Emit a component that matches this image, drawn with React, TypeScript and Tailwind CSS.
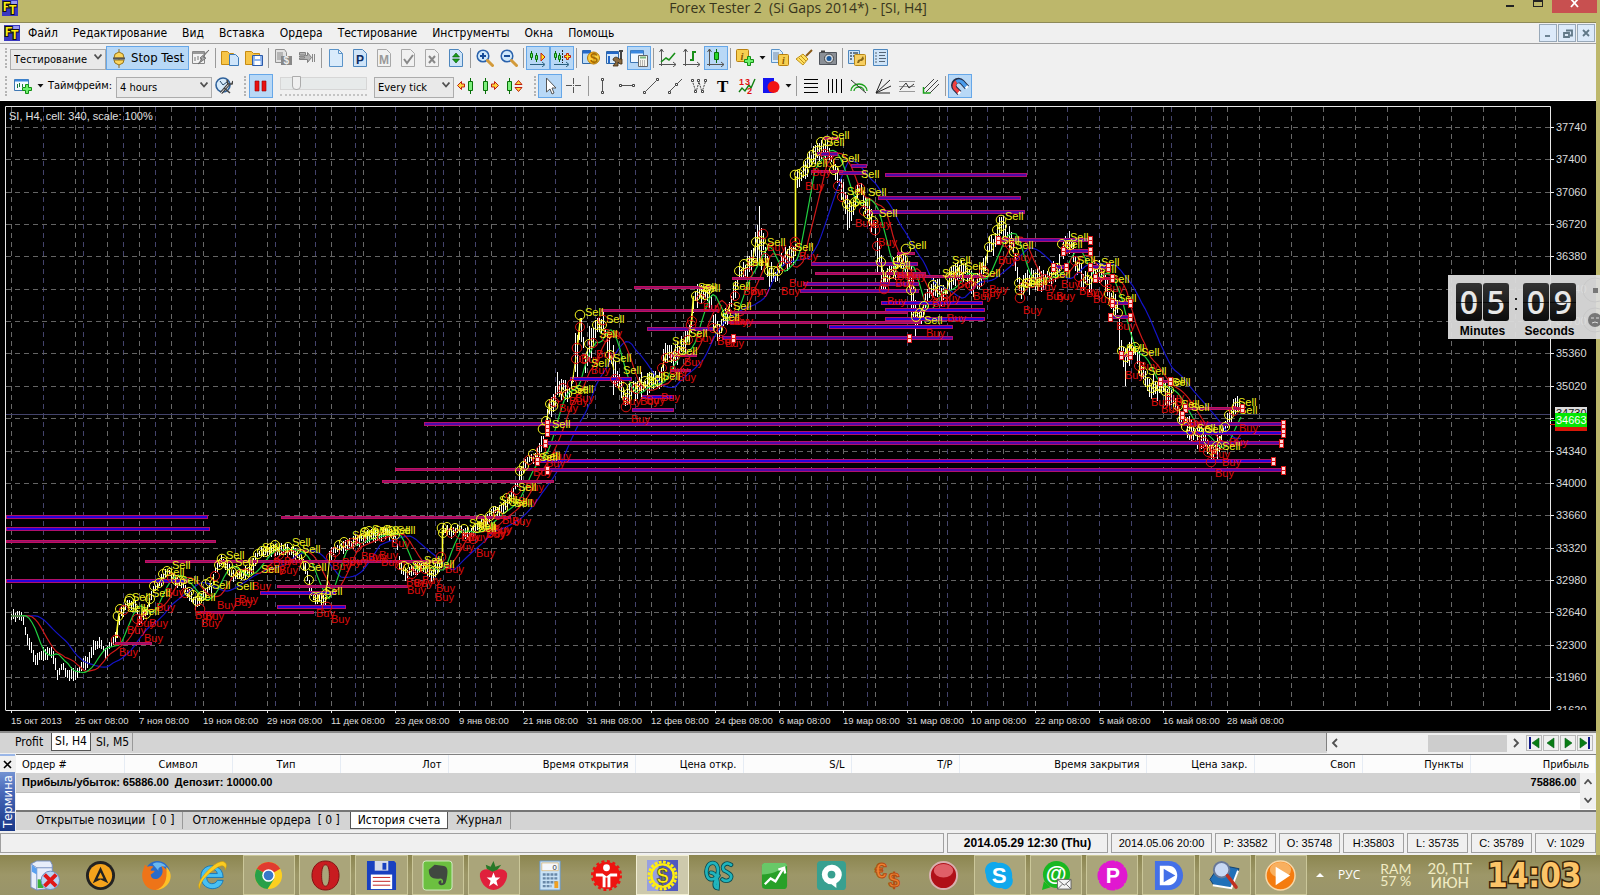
import React from "react";

type Pt = [number, number];

const UI = "font-['DejaVu_Sans_Condensed','DejaVu_Sans',sans-serif]";
const ARIAL = "font-['Liberation_Sans',Arial,sans-serif]";

/* ------------------------------------------------------------------ */
/* Chart data                                                          */
/* ------------------------------------------------------------------ */

const PRICE: Pt[] = [
  [11, 616], [20, 615], [23, 620], [26, 635], [30, 645], [33, 656], [37, 660], [42, 654], [50, 651], [54, 658], [57, 674], [62, 666],
  [68, 674], [76, 674], [80, 668], [88, 660], [93, 647], [99, 642], [105, 653], [110, 642], [116, 637], [120, 614], [128, 602],
  [135, 606], [140, 620], [146, 612], [152, 592], [160, 580], [168, 571], [174, 578], [182, 584], [190, 597], [198, 605],
  [206, 590], [212, 585], [216, 566], [222, 561], [232, 575], [240, 576], [250, 570], [258, 553], [270, 550], [280, 549],
  [292, 551], [300, 558], [306, 572], [312, 596], [320, 600], [326, 602], [328, 555], [336, 550], [350, 543], [370, 536],
  [390, 533], [396, 538], [399, 563], [405, 574], [415, 568], [424, 565], [430, 576], [436, 568], [441, 562], [443, 530],
  [452, 532], [460, 530], [470, 535], [476, 528], [485, 521], [495, 510], [505, 507], [513, 492], [520, 475], [526, 460],
  [536, 458], [543, 438], [549, 408], [556, 392], [562, 385], [568, 396], [574, 375], [580, 322], [585, 360], [590, 342],
  [597, 328], [603, 322], [608, 345], [613, 368], [620, 385], [626, 401], [632, 390], [640, 385], [650, 384], [660, 380],
  [664, 352], [672, 358], [680, 350], [690, 335], [694, 298], [700, 293], [710, 295], [713, 322], [719, 330], [726, 316],
  [732, 300], [736, 284], [742, 270], [750, 266], [757, 238], [763, 240], [768, 275], [776, 274], [782, 262], [790, 256],
  [795, 248], [797, 178], [802, 175], [808, 163], [816, 152], [824, 146], [831, 158], [836, 178], [842, 190], [848, 214],
  [854, 205], [860, 184], [866, 213], [875, 225], [879, 256], [884, 284], [890, 272], [900, 262], [908, 268], [914, 318],
  [920, 318], [928, 292], [936, 286], [943, 297], [950, 278], [958, 272], [965, 272], [974, 285], [982, 272], [988, 250],
  [995, 240], [1001, 224], [1006, 236], [1012, 242], [1016, 266], [1020, 288], [1030, 280], [1045, 277], [1058, 270],
  [1062, 248], [1070, 243], [1076, 262], [1082, 280], [1090, 280], [1097, 266], [1104, 278], [1110, 300], [1117, 308],
  [1120, 345], [1124, 360], [1130, 352], [1136, 352], [1142, 373], [1150, 386], [1160, 388], [1170, 394], [1178, 412],
  [1188, 428], [1195, 434], [1205, 440], [1212, 456], [1218, 444], [1225, 426], [1231, 414], [1237, 406], [1241, 404],
];

const noise = (n: number) => {
  const v = Math.sin(n * 12.9898) * 43758.5453;
  return v - Math.floor(v);
};

const priceAt = (x: number) => {
  if (x <= PRICE[0][0]) return PRICE[0][1];
  for (let i = 1; i < PRICE.length; i++) {
    const [x1, y1] = PRICE[i];
    if (x <= x1) {
      const [x0, y0] = PRICE[i - 1];
      return y0 + ((y1 - y0) * (x - x0)) / (x1 - x0);
    }
  }
  return PRICE[PRICE.length - 1][1];
};

const SPIKES: Record<number, [number, number]> = {
  557: [372, 395], 575: [333, 372], 577: [335, 380], 589: [326, 362], 591: [328, 358], 613: [345, 395], 755: [232, 256],
  757: [225, 262], 759: [206, 262], 761: [228, 270], 797: [170, 188], 847: [195, 230], 849: [200, 228], 877: [238, 272],
  881: [255, 290], 911: [265, 318], 913: [280, 322], 915: [300, 336], 1119: [315, 350], 1125: [348, 386], 1131: [332, 352],
};

const BARS = Array.from({ length: 615 }, (_, i) => {
  const x = 11 + i * 2;
  const spike = SPIKES[x];
  if (spike) return { x, hi: spike[0], lo: spike[1] };
  const y = priceAt(x);
  const swing = x > 540 ? 11 : 5;
  return { x, hi: Math.round(y - 2 - noise(i) * swing), lo: Math.round(y + 2 + noise(i + 900) * (swing + 1)) };
});

const BAR_PATH = BARS.map((b) => `M${b.x}.5 ${b.hi}V${b.lo}`).join("");

const average = (period: number, shift: number) => {
  const out: string[] = [];
  for (let x = 11; x <= 1242; x += 3) {
    let sum = 0;
    for (let k = 0; k < period; k++) sum += priceAt(x - (shift + k) * 2);
    out.push(`${x},${(sum / period).toFixed(1)}`);
  }
  return out.join(" ");
};

const CIRCLES = Array.from({ length: 270 }, (_, i) => {
  const x = 120 + i * 4.3;
  const red = noise(i + 40) > 0.6;
  return { x: Math.round(x), y: Math.round(priceAt(x) + (red ? 4 : -2) + (noise(i + 7) - 0.5) * 8), red };
}).filter((c) => c.x < 1238);

const EXTRA_CIRCLES: [number, number, boolean][] = [
  [116, 640, true], [118, 616, false], [130, 599, false], [580, 315, false], [577, 348, true], [603, 320, true],
  [691, 325, true], [763, 234, true], [763, 247, false], [795, 175, false], [795, 242, true], [442, 528, false],
  [441, 557, true], [626, 407, true], [884, 289, true], [906, 249, false], [1001, 220, false], [1020, 290, false],
  [1020, 298, true], [875, 230, true], [1211, 462, true], [1237, 407, false], [827, 141, false], [838, 162, false],
  [200, 609, true], [327, 607, true], [222, 559, false], [543, 429, false], [553, 406, false],
];

const SELL: Pt[] = [
  [133, 597], [128, 608], [142, 611], [153, 593], [173, 565], [167, 572], [181, 580], [198, 597], [227, 555], [236, 562],
  [213, 585], [237, 586], [263, 547], [293, 542], [303, 549], [262, 569], [309, 567], [325, 591], [353, 535], [361, 532], [373, 529],
  [381, 531], [393, 530], [398, 530], [437, 564], [425, 560], [413, 565], [478, 526], [500, 500], [515, 503], [586, 312], [607, 319], [600, 334],
  [614, 358], [624, 370], [592, 363], [576, 389], [571, 390], [648, 377], [663, 376], [673, 341], [680, 351], [690, 333],
  [734, 306], [722, 317], [703, 288], [699, 287], [733, 286], [543, 456], [540, 457], [553, 424], [519, 487], [510, 502],
  [470, 523], [479, 528], [832, 135], [827, 142], [842, 158], [862, 174], [848, 191], [853, 202], [869, 192], [880, 213],
  [768, 242], [796, 247], [746, 262], [752, 262], [810, 163], [909, 245], [953, 260], [966, 266], [983, 273], [1006, 216],
  [1002, 240], [1016, 245], [1071, 237], [1065, 244], [1023, 283], [1030, 281], [1053, 274], [1078, 260], [1102, 262],
  [1099, 269], [1112, 279], [1119, 298], [925, 320], [893, 265], [943, 273], [1127, 348], [1142, 352], [1149, 371],
  [1168, 381], [1173, 382], [1182, 404], [1192, 407], [1198, 428], [1206, 429], [1239, 402], [1240, 410], [1223, 446],
];

const BUY: Pt[] = [
  [128, 630], [137, 623], [150, 623], [145, 638], [120, 652], [157, 607], [166, 592], [196, 615], [206, 616], [202, 623],
  [218, 605], [235, 602], [240, 599], [253, 586], [267, 569], [280, 570], [274, 562], [285, 561], [317, 613], [332, 619], [333, 566], [343, 562],
  [350, 561], [362, 556], [369, 557], [380, 555], [382, 562], [392, 543], [407, 582], [415, 583], [408, 590], [423, 580],
  [437, 588], [436, 597], [446, 569], [456, 547], [462, 537], [470, 537], [477, 553], [488, 533], [493, 530], [503, 520],
  [604, 333], [597, 354], [582, 359], [592, 370], [576, 398], [570, 401], [560, 408], [553, 456], [547, 463], [534, 472],
  [526, 487], [519, 501], [513, 521], [494, 529], [487, 534], [623, 401], [641, 401], [647, 400], [662, 397], [632, 419],
  [678, 377], [685, 362], [670, 370], [696, 338], [704, 307], [718, 341], [726, 343], [735, 321], [744, 291], [751, 291],
  [782, 291], [790, 283], [806, 186], [813, 172], [856, 223], [873, 224], [879, 242], [768, 247], [800, 256],
  [730, 321], [888, 301], [896, 283], [898, 276], [908, 276], [927, 333], [933, 303], [942, 298], [948, 318], [958, 284],
  [974, 296], [983, 293], [990, 289], [999, 260], [1014, 257], [1024, 310], [1038, 287], [1047, 296], [1057, 296],
  [1062, 284], [1080, 291], [1087, 293], [1094, 299], [1106, 288], [1117, 326], [1140, 366], [1126, 375], [1166, 397],
  [1152, 402], [1162, 409], [1176, 402], [1183, 422], [1190, 423], [1199, 448], [1212, 454], [1216, 473], [1223, 462],
  [1230, 442], [1240, 428],
];

/* start, end, middle, kind: 0 = narrow, 1 = blue core, 2 = violet core */
const GAPS: [number, number, number, number][] = [
  [6, 207, 517, 1], [6, 209, 529, 1], [6, 215, 541, 0], [6, 187, 581, 1], [145, 440, 561, 0], [281, 510, 517, 0],
  [277, 407, 586, 0], [260, 335, 593, 1], [277, 345, 607, 1], [200, 313, 612, 0], [115, 151, 643, 0],
  [424, 1283, 424, 2], [547, 1283, 433, 1], [545, 1281, 443, 2], [537, 1273, 461, 1], [547, 1283, 470, 2],
  [395, 545, 469, 0], [382, 553, 481, 0], [570, 631, 379, 1], [632, 673, 410, 2], [642, 673, 397, 1], [634, 714, 287, 0],
  [601, 718, 310, 0], [647, 714, 329, 2], [672, 696, 355, 0], [670, 690, 370, 0], [732, 763, 278, 0],
  [811, 917, 264, 2], [815, 925, 273, 0], [803, 918, 284, 2], [800, 918, 291, 2], [881, 982, 303, 1], [885, 984, 310, 1],
  [885, 984, 319, 1], [829, 952, 327, 1], [722, 952, 338, 2], [725, 907, 312, 0], [728, 920, 322, 0], [885, 1026, 175, 2],
  [878, 1020, 198, 2], [870, 1024, 212, 2], [851, 866, 166, 2], [839, 865, 173, 2], [817, 837, 154, 2], [823, 838, 138, 0],
  [811, 842, 171, 0], [897, 985, 276, 0], [897, 914, 253, 0], [998, 1090, 240, 2], [1063, 1090, 251, 2],
  [1053, 1066, 267, 2], [1090, 1108, 267, 2], [1095, 1112, 278, 0], [1112, 1130, 303, 2], [1110, 1130, 317, 2],
  [1121, 1130, 355, 0], [1160, 1170, 381, 0], [1185, 1242, 408, 0],
];

const HANDLES: Pt[] = [
  [547, 424], [547, 432], [545, 443], [537, 461], [547, 470], [1283, 424], [1283, 433], [1281, 443], [1273, 461], [1283, 470],
  [733, 338], [909, 338], [998, 240], [1090, 240], [1063, 251], [1090, 251], [1053, 267], [1066, 267], [1090, 267],
  [1108, 267], [1095, 278], [1112, 278], [1112, 303], [1130, 303], [1110, 317], [1130, 317], [1121, 355], [1130, 355],
  [1160, 381], [1170, 381], [1185, 408], [1242, 408], [1182, 415],
];

const WEEKS = [
  43, 83, 123, 155, 195, 235, 275, 315, 355, 395, 435, 443, 475, 515, 555, 595, 635, 675, 715, 755, 795, 827, 867, 907, 947,
  987, 1027, 1067, 1099, 1131, 1171, 1211,
];
const GRID_X = Array.from({ length: 48 }, (_, i) => 11 + i * 32).filter((x) => !WEEKS.includes(x));
const GRID_Y = Array.from({ length: 18 }, (_, i) => Math.round(127 + i * 32.35));
const DATES = [
  "15 окт 2013", "25 окт 08:00", "7 ноя 08:00", "19 ноя 08:00", "29 ноя 08:00", "11 дек 08:00", "23 дек 08:00",
  "9 янв 08:00", "21 янв 08:00", "31 янв 08:00", "12 фев 08:00", "24 фев 08:00", "6 мар 08:00", "19 мар 08:00",
  "31 мар 08:00", "10 апр 08:00", "22 апр 08:00", "5 май 08:00", "16 май 08:00", "28 май 08:00",
];

function Chart() {
  return (
    <svg viewBox="0 101 1596 630" className="block h-auto w-full bg-black" fontFamily="'Liberation Sans', Arial, sans-serif">
      <g strokeDasharray="5 4" shapeRendering="crispEdges">
        {GRID_X.map((x) => <path key={x} d={`M${x}.5 107V710`} stroke="#686868" />)}
        {WEEKS.map((x) => <path key={x} d={`M${x}.5 107V710`} stroke="#43436b" />)}
        {GRID_Y.map((y) => <path key={y} d={`M6 ${y}.5H1550`} stroke="#646464" />)}
      </g>
      <path d="M6 414.5H1550" stroke="#43436b" />
      <path d={BAR_PATH} stroke="#fff" strokeWidth="1" shapeRendering="crispEdges" />
      <polyline points={average(20, 7)} fill="none" stroke="#1414c8" strokeWidth="1.2" />
      <polyline points={average(12, 4)} fill="none" stroke="#d01818" strokeWidth="1.2" />
      <polyline points={average(8, 2)} fill="none" stroke="#20d040" strokeWidth="1.2" />
      <g shapeRendering="crispEdges">
        {GAPS.map(([a, b, y, k], i) => (
          <rect
            key={i} x={a + 0.5} y={k ? y - 1.5 : y - 0.5} width={b - a} height={k ? 3 : 2}
            fill={k === 1 ? "#2800d8" : k === 2 ? "#5008a8" : "#90106c"} stroke={k === 0 ? "#c01060" : "#b0106c"}
          />
        ))}
      </g>
      <g stroke="#ffff30">
        <path d="M795.5 176V242M442.5 530V556M580.5 318L577.5 345M693.5 296L691.5 322M119 614L116 638" fill="none" strokeWidth="1.6" />
        {CIRCLES.map((c, i) => (i % 3 === 0 ? <path key={i} d={`M${c.x} ${c.y}L${c.x + 4} ${Math.round(priceAt(c.x + 4))}`} /> : null))}
      </g>
      <g fill="none">
        {CIRCLES.map((c, i) => <circle key={i} cx={c.x} cy={c.y} r="4.5" stroke={c.red ? "#e01010" : "#f4f420"} />)}
        {EXTRA_CIRCLES.map(([x, y, red], i) => <circle key={i} cx={x} cy={y} r="4.8" stroke={red ? "#e01010" : "#f4f420"} />)}
      </g>
      <g fontSize="11" fill="#e00c0c">
        {BUY.map(([x, y], i) => <text key={i} x={x - 1} y={y + 4}>Buy</text>)}
      </g>
      <g fontSize="11" fill="#f2f21c">
        {SELL.map(([x, y], i) => <text key={i} x={x - 1} y={y + 4}>Sell</text>)}
      </g>
      <g shapeRendering="crispEdges" fill="#ffd8d8" stroke="#d81818">
        {HANDLES.map(([x, y], i) => <path key={i} d={`M${x - 2}.5 ${y - 4}.5h4v8h-4zM${x - 2}.5 ${y}.5h4`} />)}
      </g>
      <path d="M5.5 710V106.5H1550.5V710.5H5.5" fill="none" stroke="#e8e8e8" />
      {GRID_Y.map((y) => <path key={y} d={`M1550 ${y}.5h4`} stroke="#e8e8e8" />)}
      {DATES.map((d, i) => <path key={d} d={`M${11 + i * 64}.5 710v3`} stroke="#e8e8e8" />)}
      <text x="9" y="120" fontSize="11" fill="#e0e0e0">SI, H4, cell: 340, scale: 100%</text>
      <g fontSize="11" fill="#dcdcdc">
        {GRID_Y.map((y, i) => <text key={y} x="1556" y={y + 4}>{37740 - i * 340}</text>)}
        <svg x="1550" y="700" width="46" height="10" viewBox="1550 700 46 10"><text x="1556" y="714">31620</text></svg>
      </g>
      <g fontSize="9.5" fill="#dcdcdc">
        {DATES.map((d, i) => <text key={d} x={11 + i * 64} y="724">{d}</text>)}
      </g>
      <path d="M1555 407h32v8h-32z" fill="#dcdcdc" />
      <svg x="1555" y="407" width="32" height="6" viewBox="1555 407 32 6"><text x="1556" y="417" fontSize="11" fill="#111">34730</text></svg>
      <path d="M1555 425h32v6h-32z" fill="#d81808" />
      <path d="M1555 413h32v14h-32z" fill="#04e804" />
      <text x="1556" y="424" fontSize="11" fill="#fff">34663</text>
      <path d="M1550 420.5h5" stroke="#04e804" />
      <path d="M1550 424.5h5" stroke="#d81808" />
    </svg>
  );
}

/* ------------------------------------------------------------------ */
/* Toolbar                                                             */
/* ------------------------------------------------------------------ */

const ICONS: Record<string, React.ReactNode> = {
  strategy: <><path d="M.5 2.5h12v12h-12z" fill="#f2f2f2" stroke="#888" /><path d="M1 4h11" stroke="#999" strokeWidth="2" /><path d="M3 8v4M6 7v4M9 9v3" stroke="#777" /><path d="M17 1L8 9l2 1-4 5 8-6-3-1z" fill="#aaa" stroke="#666" strokeWidth=".8" /></>,
  open: <><path d="M.5 2.5h6l2 2h4v11h-12z" fill="#f7c548" stroke="#c78b10" /><path d="M8.500 5.500h6l3 3v8h-9z" fill="#cfe5fa" stroke="#3d7ab8" /></>,
  save: <><path d="M.5 2.500h6l2 2h6v11h-14z" fill="#f7c548" stroke="#c78b10" /><path d="M7.500 6.500h10v10h-10z" fill="#8db4ee" stroke="#2c5aa8" /><path d="M10 7h5v3h-5zM9.500 12h6v4h-6z" fill="#fff" /></>,
  money: <><path d="M1.500 .500h9l2 3v10h-11z" fill="#e2e2e2" stroke="#909090" /><path d="M3 4h6M3 6h6M3 8h5M3 10h5" stroke="#888" /><path d="M7 7h11v9h-11z" fill="#888" /><text x="9.500" y="15" fontSize="10" fontWeight="bold" fill="#eee">$</text></>,
  step: <><path d="M1.500 3.500h6v3h2v-3l4 5-4 5v-3h-8v-1.500h5v-1h-5v-1h5v-1h-5z" fill="#b4b4b4" stroke="#808080" /><path d="M14.500 5v8M16.500 5v8" stroke="#888" /></>,
  doc: <path d="M2.500 .500h9l4 4v13h-13z M11.500 .500v4h4" fill="#d9ebfb" stroke="#5a93c8" />,
  docP: <><path d="M2.500 .500h9l4 4v13h-13z" fill="#cfe4f8" stroke="#4d86bd" /><text x="5" y="14.500" fontSize="12" fontWeight="bold" fill="#0b2a63">P</text></>,
  docM: <><path d="M2.500 .500h9l4 4v13h-13z" fill="#f1f1f1" stroke="#a8a8a8" /><text x="4" y="14.500" fontSize="12" fontWeight="bold" fill="#999">M</text></>,
  docV: <><path d="M2.500 .500h9l4 4v13h-13z" fill="#f1f1f1" stroke="#a8a8a8" /><path d="M5 10l3 4 6-8" fill="none" stroke="#888" strokeWidth="2" /></>,
  docX: <><path d="M2.500 .500h9l4 4v13h-13z" fill="#f1f1f1" stroke="#a8a8a8" /><path d="M6 7l6 7M12 7l-6 7" stroke="#888" strokeWidth="2" /></>,
  docUp: <><path d="M2.500 .500h9l4 4v13h-13z" fill="#cfe4f8" stroke="#4d86bd" /><path d="M5.500 8l3.500-4 3.500 4zM5.500 10l3.500 4 3.500-4z" fill="#18a018" stroke="#064f06" strokeWidth=".6" /></>,
  zin: <><circle cx="7" cy="7" r="5.800" fill="#cfe8fb" stroke="#2a62ac" strokeWidth="1.500" /><path d="M4 7h6M7 4v6" stroke="#174c98" strokeWidth="2" /><path d="M11.500 11.500l5 5" stroke="#d39a3a" strokeWidth="3" strokeLinecap="round" /></>,
  zout: <><circle cx="7" cy="7" r="5.800" fill="#cfe8fb" stroke="#2a62ac" strokeWidth="1.500" /><path d="M4 7h6" stroke="#174c98" strokeWidth="2" /><path d="M11.500 11.500l5 5" stroke="#d39a3a" strokeWidth="3" strokeLinecap="round" /></>,
  roll: <><path d="M2.500 2v9M7.500 4v9" stroke="#087008" /><path d="M1.500 4.500h2v4h-2zM6.500 6.500h2v4h-2z" fill="#60f060" stroke="#087008" /><path d="M12 4l4 4-4 4z" fill="#ffe21c" stroke="#c02010" /><path d="M1 15.500h14M13 13l3 2.500-3 2.500" fill="none" stroke="#2a6080" /></>,
  shift: <><path d="M2.500 2v9M6.500 4v9" stroke="#087008" /><path d="M1.500 4.500h2v4h-2zM5.500 6.500h2v4h-2z" fill="#60f060" stroke="#087008" /><path d="M9.500 1v13" stroke="#222" strokeDasharray="2 1" /><path d="M13.500 4.500h2v2h2v2h-2v2h-2v-2h-2v-2h2z" fill="#ffe21c" stroke="#c02010" /><path d="M1 15.500h14M13 13l3 2.500-3 2.500" fill="none" stroke="#2a6080" /></>,
  dollar: <><path d="M.5 1.500h8v13h-8z" fill="#bcdcf8" stroke="#2f68a8" /><path d="M1 3h8" stroke="#2468c8" strokeWidth="3" /><circle cx="11.500" cy="9" r="6" fill="#ffcf3c" stroke="#b47808" /><text x="8" y="14" fontSize="14" fontWeight="bold" fill="#a86c00">$</text></>,
  build: <><path d="M.5 2.500h12v12h-12z" fill="#d8eafb" stroke="#2f68a8" /><path d="M1 4h11M3 7v7" stroke="#2468c8" strokeWidth="2" /><path d="M15 1v9M13 2h4" stroke="#444" strokeWidth="2" /><path d="M7 11c0-3 4-4 6-1h3v5h-2l-2-2v4h-5l3-4z" fill="#8a6a40" stroke="#3a2810" strokeWidth=".8" /></>,
  calc: <><path d="M.5 1.500h13v12h-13z" fill="#eff7ff" stroke="#3f78b4" /><path d="M1 3h12" stroke="#3a88e0" strokeWidth="3" /><path d="M8.500 6.500h9v11h-9z" fill="#f6f6ee" stroke="#666" /><path d="M10 8.500h6" stroke="#7ab87a" strokeWidth="2" /><path d="M10 12h6M10 14h6M10 16h6" stroke="#777" strokeDasharray="1 1" /></>,
  line: <><path d="M2.500 0v17M0 15.500h17M0.500 3l2-3 2 3M14 13l3 2.500-3 2.500" fill="none" stroke="#555" /><path d="M2 13l5-4 3 2 6-7" fill="none" stroke="#189018" strokeWidth="1.600" /></>,
  bars: <><path d="M2.500 0v17M0 15.500h17M0.500 3l2-3 2 3M14 13l3 2.500-3 2.500" fill="none" stroke="#555" /><path d="M10 2v10M10 3h3M7 11h3" fill="none" stroke="#189018" strokeWidth="2" /></>,
  candle: <><path d="M2.500 0v17M0 15.500h17M0.500 3l2-3 2 3M14 13l3 2.500-3 2.500" fill="none" stroke="#555" /><path d="M9.500 0v14" stroke="#087008" /><path d="M7.500 3.500h4v7h-4z" fill="#28d828" stroke="#087008" /></>,
  info: <><rect x=".5" y=".5" width="12" height="12" rx="1" fill="#f7cf50" stroke="#b88010" /><text x="4.500" y="11" fontSize="11" fontStyle="italic" fontWeight="bold" fill="#8a5800" fontFamily="Liberation Serif, serif">i</text><path d="M11.500 7.500h3v3h3v3h-3v3h-3v-3h-3v-3h3z" fill="#6cf06c" stroke="#149014" /></>,
  infodoc: <><path d="M.5 .500h8l3 3v10h-11z" fill="#d9ebfb" stroke="#5a93c8" /><path d="M2 4h6M2 6h6M2 8h5M2 10h5" stroke="#6a86a8" /><rect x="7.500" y="5.500" width="10" height="11" rx="1" fill="#f7cf50" stroke="#b88010" /><text x="11" y="15" fontSize="10" fontStyle="italic" fontWeight="bold" fill="#8a5800" fontFamily="Liberation Serif, serif">i</text></>,
  broom: <><path d="M17 1l-6 6" stroke="#8a5a18" strokeWidth="2" /><path d="M8 5l5 5-5 6-7-6z" fill="#ffe060" stroke="#c09018" /><path d="M4 9l5 5M6 7l5 5" stroke="#c09018" /></>,
  camera: <><path d="M.5 3.500h17v12h-17z" fill="#8a8f96" stroke="#50555c" /><path d="M2 1.500h4v2h-4z" fill="#444" /><circle cx="10" cy="9.500" r="4.500" fill="#d8dde2" stroke="#444" /><circle cx="10" cy="9.500" r="2.500" fill="#1c5a9c" /></>,
  props: <><path d="M.5 1.500h11v13h-11z" fill="#cfe4f8" stroke="#4d86bd" /><path d="M2 4h2M2 7h2M2 10h2M5 4h5M5 7h5" stroke="#456" strokeWidth="1.500" /><rect x="6.500" y="5.500" width="11" height="11" rx="1" fill="#f7cf62" stroke="#b88818" /><path d="M9 14l1-3 3-1 2-3 1 3-2 2-2 0-1 2z" fill="#8a6818" /></>,
  list: <><path d="M1.500 .500h14v16h-14z" fill="#cfe4f8" stroke="#4d86bd" /><path d="M3 4h2M3 7h2M3 10h2M3 13h2M7 3.500h7M7 6.500h6M7 9.500h7M7 12.500h6" stroke="#567" strokeWidth="1.200" /></>,
  newchart: <><path d="M.5 2.500h14v11h-14z" fill="#f4faff" stroke="#3f78b4" /><path d="M1 3.500h13" stroke="#3a88e0" strokeWidth="2" /><path d="M3.500 7v4M5.500 6v4M8.500 7v3" stroke="#1a7a3a" /><path d="M11.500 7.500h3v3h3v3h-3v3h-3v-3h-3v-3h3z" fill="#6cf06c" stroke="#149014" /></>,
  tools: <><circle cx="8" cy="8" r="7" fill="#d8ebfa" stroke="#2f629c" strokeWidth="1.600" /><path d="M5 4l3 4 4-3" fill="none" stroke="#246" /><path d="M6 16l8-9" stroke="#444" strokeWidth="3" /><path d="M6 16l8-9" stroke="#ddd" /><path d="M12 3l1 4 4 0 1-3M9 11l6 5" stroke="#444" strokeWidth="1.600" fill="none" /></>,
  pause: <path d="M3 4h4v10h-4zM10 4h4v10h-4z" fill="#e81010" stroke="#900" strokeWidth=".6" />,
  back: <><path d="M.5 8.500l4-4v2.500h3v3h-3v2.500z" fill="#ffd83c" stroke="#c02010" /><path d="M13.500 1v16" stroke="#087008" /><path d="M11.500 4.500h4v9h-4z" fill="#7cf07c" stroke="#087008" /></>,
  fwd: <><path d="M4.500 1v16" stroke="#087008" /><path d="M2.500 4.500h4v9h-4z" fill="#7cf07c" stroke="#087008" /><path d="M17.500 8.500l-4-4v2.500h-3v3h3v2.500z" fill="#ffd83c" stroke="#c02010" /></>,
  updn: <><path d="M4.500 1v16" stroke="#087008" /><path d="M2.500 4.500h4v9h-4z" fill="#7cf07c" stroke="#087008" /><path d="M10 7.500l3.500-4 3.500 4zM10 10.500l3.500 4 3.500-4z" fill="#ffd83c" stroke="#c02010" /></>,
  arrow: <path d="M5.500 1v14l3.500-3 2 5 2-1-2-5h4z" fill="#fff" stroke="#555" />,
  cross: <path d="M8.500 1v6M8.500 10v6M1 8.500h6M10 8.500h6M8 8.500h1" stroke="#555" />,
  vline: <><path d="M8.500 4v10" stroke="#555" /><path d="M7.500 1.500h2v2h-2zM7.500 14.500h2v2h-2z" fill="#fff" stroke="#444" /></>,
  hline: <><path d="M4 8.500h10" stroke="#555" /><path d="M1.500 7.500h2v2h-2zM14.500 7.500h2v2h-2z" fill="#fff" stroke="#444" /></>,
  trend: <><path d="M4 14L14 4" stroke="#555" /><path d="M1.500 14.500h2v2h-2zM14.500 1.500h2v2h-2z" fill="#fff" stroke="#444" /></>,
  ray: <><path d="M3 15L16 2" stroke="#555" /><path d="M2.500 14.500h2v2h-2zM9.500 6.500h2v2h-2z" fill="#fff" stroke="#444" /></>,
  wave: <><path d="M2 3l4 12 3-10 3 10 4-12" fill="none" stroke="#444" strokeDasharray="2 1" /><path d="M1.500 2.500h2v2h-2zM7.500 2.500h2v2h-2zM14.500 2.500h2v2h-2zM4.500 13.500h2v2h-2zM11.500 13.500h2v2h-2z" fill="#fff" stroke="#444" /></>,
  text: <text x="3" y="15" fontSize="17" fontWeight="bold" fontFamily="Liberation Serif, serif" fill="#000">T</text>,
  elliott: <><path d="M1 15l3-4 3 3 4-6 2 3 4-9" fill="none" stroke="#108010" strokeWidth="1.400" /><g fontSize="9" fontWeight="bold" fill="#e01010"><text x="1" y="8">1</text><text x="7" y="8">3</text><text x="9" y="17">2</text></g></>,
  shapes: <><path d="M1 1h11v15h-11z" fill="#1414f0" /><circle cx="11.500" cy="10" r="6" fill="#f01414" /></>,
  rows: <path d="M2 2.500h14M2 6.500h14M2 10.500h14M2 15.500h14" stroke="#000" />,
  cols: <path d="M2.500 2v14M6.500 2v14M10.500 2v14M15.500 2v14" stroke="#000" />,
  arcs: <><path d="M1 14a8 7 0 0116 0M4 14a5 4 0 0110 0" fill="none" stroke="#18a018" strokeWidth="1.300" /><path d="M1 3l15 13" stroke="#333" /></>,
  fan: <path d="M2 16L16 3M2 16L8 2M2 16L17 9M2 16h14" stroke="#222" />,
  fibo: <><path d="M1 4.500h16M1 9.500h16M1 14.500h16" stroke="#999" /><path d="M2 13l6-7 3 5 5-4" fill="none" stroke="#333" /></>,
  pitch: <><path d="M2 12L12 2M4 15L16 3M8 16L17 7" stroke="#444" /><path d="M1.500 10v6h7" fill="none" stroke="#18a018" strokeWidth="1.500" /></>,
  magnet: <><path d="M8.500 16L4 11.500A4.600 4.600 0 0111 5l5 5.500" fill="none" stroke="#222c48" strokeWidth="5.400" /><path d="M8.500 16L4 11.500A4.600 4.600 0 015.500 4.800" fill="none" stroke="#f04040" strokeWidth="3.400" /><path d="M5.500 4.800A4.600 4.600 0 0111 5l5 5.500" fill="none" stroke="#4a9cec" strokeWidth="3.400" /><path d="M7.500 15l1.500 1.500M15 9.500l1.500 1.500" stroke="#fff" strokeWidth="3.400" /></>,
};

function Tool({ id, on }: { id: string; on?: boolean }) {
  return (
    <button
      aria-label={id}
      className={"flex h-6 w-6 shrink-0 items-center justify-center border " + (on ? "border-[#66a7e8] bg-[#b8d8f6]" : "border-transparent")}
    >
      <svg width="18" height="18" viewBox="0 0 18 18" className={ARIAL}>{ICONS[id]}</svg>
    </button>
  );
}
const Tools = ({ ids }: { ids: string[] }) => <>{ids.map((i) => <Tool key={i} id={i} />)}</>;
const Sep = () => <span className="mx-0.5 h-5 w-px shrink-0 bg-[#9a9a9a]" />;
const Grip = () => <span className="h-5 w-0 shrink-0 border-l-2 border-dotted border-[#b4b4b4]" />;
const Down = () => (
  <svg width="11" height="6" viewBox="0 0 11 6" className="shrink-0"><path d="M2.500 1h6l-3 3.500z" fill="#111" /></svg>
);

function Pick({ label, value, className }: { label: string; value: string; className: string }) {
  return (
    <span className={"relative shrink-0 " + className}>
      <select aria-label={label} id={label} className="h-[21px] w-full appearance-none border border-[#acacac] bg-[#e9e9e9] pl-[3px] text-[11px] text-black">
        <option>{value}</option>
      </select>
      <svg width="8" height="6" viewBox="0 0 8 6" className="pointer-events-none absolute right-1 top-2">
        <path d="M0.500 .500L4 4.500 7.500 .500" fill="none" stroke="#505050" strokeWidth="1.800" />
      </svg>
    </span>
  );
}

function Logo() {
  return (
    <svg width="16" height="16" viewBox="0 0 16 16" className={"shrink-0 " + ARIAL}>
      <path d="M0 0h16v16h-16z" fill="#3a38c0" />
      <path d="M1 1h14v6h-14z" fill="#9a98f0" />
      <g fontWeight="bold" fill="#ffee10" stroke="#111" strokeWidth="2.200" paintOrder="stroke"><text x="1" y="11" fontSize="12">F</text><text x="7" y="14" fontSize="12">T</text></g>
    </svg>
  );
}

/* ------------------------------------------------------------------ */
/* Task bar                                                            */
/* ------------------------------------------------------------------ */

const APPS: { name: string; open?: boolean; active?: boolean; art: React.ReactNode }[] = [
  { name: "Uninstaller", art: <><path d="M2 4l6-3h14l2 4v24l-16 2-6-3z" fill="#e8eefa" stroke="#7890c0" /><path d="M2 4l6 4h16M8 8v23" fill="none" stroke="#7890c0" /><path d="M3 5l5 4v6l-5-3z" fill="#5aa0f0" /><path d="M9 20h6v9h-6z" fill="#38b038" /><circle cx="22" cy="21" r="9.500" fill="#b8d4f4" stroke="#6c90c0" /><path d="M16 15l12 12M28 15l-12 12" stroke="#e01818" strokeWidth="4" /></> },
  { name: "AIMP", art: <><circle cx="16" cy="16" r="15" fill="#222" /><circle cx="16" cy="16" r="12" fill="#f5a31c" /><path d="M16 7l8 17-8-4-8 4z" fill="#222" /><path d="M16 13l3 6h-6z" fill="#f5a31c" /></> },
  { name: "Firefox", art: <><circle cx="17" cy="14" r="13" fill="#2a6cc8" /><path d="M12 4c5-3 12-1 14 3-4-1-9 0-8 4z" fill="#68b8f0" /><path d="M3 8l1-3 3 2c2-1 4-1 6 0-2 1-3 3-3 4h4c0 2-3 3-4 4 0 5 6 6 9 3 4-3 4-8 2-12 6 3 9 8 8 13-2 8-8 12-14 12C4 31-2 19 3 8z" fill="#ee7418" /><path d="M26 7c5 4 6 11 3 16-3 5-8 8-14 8 8-2 13-9 11-24z" fill="#fcc028" /></> },
  { name: "Internet Explorer", art: <><path d="M27 18H10c0 8 9 8 11 3h6c-3 13-23 11-23-4S27 2 27 18zM10 14h11c-1-6-10-6-11 0z" fill="#48c0f4" stroke="#1878b8" /><path d="M3 30C-4 24 20-2 28 2c4 2 2 6 1 8 0-4-3-6-10-1C10 15 2 24 3 30z" fill="#fccb20" stroke="#c89808" strokeWidth=".6" /></> },
  { name: "Chrome", open: true, art: <><circle cx="16" cy="16" r="14" fill="#fcd020" /><path d="M16 16L3.900 9A14 14 0 0128.100 9z" fill="#e03c30" /><path d="M16 16L3.900 9A14 14 0 0015 30l7-11z" fill="#28a048" /><circle cx="16" cy="16" r="6.500" fill="#fff" /><circle cx="16" cy="16" r="5" fill="#3878c8" /></> },
  { name: "Opera", open: true, art: <path fillRule="evenodd" d="M16 1c9 0 14 7 14 15s-5 15-14 15S2 24 2 16 7 1 16 1zm0 4c-3 0-4 5-4 11s1 11 4 11 4-5 4-11-1-11-4-11z" fill="#c81c20" stroke="#801012" /> },
  { name: "Total Commander", open: true, art: <><path d="M1 1h28l2 2v28h-30z" fill="#1840c0" /><path d="M9 1h14v10h-14z" fill="#d8dce8" /><path d="M17 3h4v7h-4z" fill="#1840c0" /><path d="M5 15h22v15h-22z" fill="#fff" /><path d="M7 18h18M7 22h18M7 26h18" stroke="#c02020" /></> },
  { name: "Evernote", open: true, art: <><rect x="1" y="1" width="30" height="30" rx="3" fill="#6cc040" stroke="#d8f0c8" /><path d="M7 10l6-5 8 1c5 0 6 4 5 10-1 6-1 10-6 10-4 0-4-5 0-5v3c3 0 2-5-1-5-8 1-12-1-12-9z" fill="#404840" /></> },
  { name: "Pomodoro", open: true, art: <><path d="M2 14c2-6 9-5 14-3 5-2 12-3 14 3 1 8-6 17-14 17S1 22 2 14z" fill="#e0203c" /><path d="M8 5l5 2 3-6 2 6 6-2-4 5-5 2-6-3z" fill="#287828" /><path d="M16 13l2 5 5 0-4 3.500 1.500 5.500-4.500-3-4.500 3 1.500-5.500-4-3.500 5 0z" fill="#fff" /></> },
  { name: "Calculator", art: <><path d="M5 1h21v30h-21z" fill="#c8e2f6" stroke="#6c98c0" /><path d="M7 3h17v8h-17z" fill="#f4f8fc" stroke="#d8a850" strokeWidth=".6" /><text x="18" y="10" fontSize="8" fill="#333">0</text><path d="M8 15h15M8 19h15M8 23h15M8 27h9" stroke="#6888a8" strokeWidth="2.400" strokeDasharray="3 1" /><path d="M20 22h4v7h-4z" fill="#f0a020" /></> },
  { name: "Gear", art: <><circle cx="16" cy="16" r="14" fill="#ee1410" /><circle cx="16" cy="16" r="14.500" fill="none" stroke="#ee1410" strokeWidth="3" strokeDasharray="3 2.700" /><circle cx="16" cy="8" r="3.500" fill="#fff" /><path d="M5 14h7l4 3 4-3h7v3h-7v11h-3v-10h-2v10h-3v-11h-7z" fill="#fff" /></> },
  { name: "Forex Tester", open: true, active: true, art: <><path d="M0 0h32v32h-32z" fill="#5058c0" /><path d="M0 0h12v32h-12z" fill="#98a0e0" /><circle cx="16" cy="16" r="14" fill="none" stroke="#ffee10" strokeWidth="3" strokeDasharray="3 1.400" /><circle cx="16" cy="16" r="11.500" fill="none" stroke="#ffee10" strokeWidth="2.500" /><text x="10" y="24" fontSize="22" fontWeight="bold" fill="#ffee10" stroke="#333" strokeWidth=".6">$</text></> },
  { name: "QS", art: <g fill="none" strokeLinecap="round"><path d="M10 3c8 0 7 17-1 17S2 3 10 3zM8 13c5 0 8 7 7 16-5-1-3-8 1-13M29 5c-6-4-11 2-7 6 6 3 9 5 6 9-2 2-6 2-8 0" stroke="#064a50" strokeWidth="4.500" /><path d="M10 3c8 0 7 17-1 17S2 3 10 3zM8 13c5 0 8 7 7 16-5-1-3-8 1-13M29 5c-6-4-11 2-7 6 6 3 9 5 6 9-2 2-6 2-8 0" stroke="#20b4bc" strokeWidth="2.800" /></g> },
  { name: "Quotes", art: <><rect x="3" y="3" width="26" height="27" rx="4" fill="#28a028" /><path d="M3 15c10 0 18-4 26-9v-1l-2-2h-22l-2 2z" fill="#68c868" /><path d="M6 25l6-6 5 3 8-13M20 10l6-2 1 6" fill="none" stroke="#fff" strokeWidth="2.400" /></> },
  { name: "Quik", art: <><rect x="1" y="1" width="30" height="30" rx="4" fill="#38a090" /><path d="M16 5a10 10 0 100 20l5 4 0-5A10 10 0 0016 5z" fill="#fff" /><circle cx="16" cy="15" r="4" fill="#38a090" /></> },
  { name: "Currency", art: <g fill="#f08030" stroke="#b04c10" strokeWidth="1" fontWeight="bold"><text x="3" y="19" fontSize="22">€</text><text x="17" y="28" fontSize="21">$</text></g> },
  { name: "Recorder", art: <><circle cx="16" cy="16" r="14" fill="#b01018" stroke="#d8b0b0" strokeWidth="2" /><ellipse cx="16" cy="11" rx="10" ry="7" fill="#e06068" /></> },
  { name: "Skype", open: true, art: <><path d="M9 2a9 9 0 00-7 13c0 8 7 15 16 14 7 4 14-4 11-11C30 8 23 2 15 3 13 2 11 2 9 2z" fill="#10a8ec" /><text x="8" y="24" fontSize="23" fontWeight="bold" fill="#fff">S</text></> },
  { name: "Mail Agent", open: true, art: <><circle cx="16" cy="15" r="14" fill="#18b820" /><path d="M3 22l-2 9 9-3z" fill="#18b820" /><text x="5" y="22" fontSize="22" fontWeight="bold" fill="#fff">@</text><path d="M17 20h14v10h-14z" fill="#f4f4f4" stroke="#666" /><path d="M17 20l7 6 7-6M17 30l5-5M31 30l-5-5" fill="none" stroke="#666" /></> },
  { name: "P", open: true, art: <><circle cx="16" cy="16" r="14" fill="#e018d0" stroke="#e018d0" strokeWidth="3" strokeDasharray="7 3" strokeLinecap="round" /><text x="9" y="24" fontSize="22" fontWeight="bold" fill="#fff">P</text></> },
  { name: "D", open: true, art: <><path d="M2 1h14c20 0 20 30 0 30h-14z" fill="#4470e8" /><path d="M7 6h9c12 0 12 20 0 20h-9z" fill="#fff" /><path d="M11 9l12 7-12 7z" fill="#4470e8" /></> },
  { name: "Dictionary", open: true, art: <><path d="M1 20l10-15 20 4-8 20-18-3z" fill="#2070b8" stroke="#104070" /><path d="M4 26l19 3 7-18" fill="none" stroke="#fff" strokeWidth="2" /><circle cx="13" cy="10" r="8" fill="#c8d8f4" stroke="#687898" strokeWidth="2" /><path d="M19 16l9 12" stroke="#c03020" strokeWidth="3.500" strokeLinecap="round" /></> },
  { name: "Player", open: true, art: <><circle cx="16" cy="16" r="15" fill="#f47c10" stroke="#f8d8a8" strokeWidth="1.500" /><ellipse cx="16" cy="10" rx="11" ry="8" fill="#f8b060" /><path d="M11 7l15 9-15 10z" fill="#fff" /></> },
];

function TaskBar() {
  return (
    <footer className="flex h-10 items-center bg-linear-to-b from-[#8c8650] via-[#9d9768] to-[#99946a]">
      <nav className="ml-4 grid w-[1293px] shrink-0 grid-cols-[repeat(23,minmax(0,1fr))]">
        {APPS.map((a) => (
          <button
            key={a.name} aria-label={a.name}
            className={
              "mx-0.5 flex h-10 items-center justify-center border " +
              (a.active ? "border-[#f2efd4] bg-[#cdc9ac]" : a.open ? "border-[#cbc79a] bg-[#aaa57a]" : "border-transparent")
            }
          >
            <svg width="31" height="31" viewBox="0 0 32 32" className={ARIAL}>{a.art}</svg>
          </button>
        ))}
      </nav>
      <div className="flex grow items-center text-[#f1ecc4]">
        <svg width="10" height="6" viewBox="0 0 10 6" className="ml-1.5"><path d="M1 5h8L5 1z" fill="#fff" /></svg>
        <span className="ml-[13px] font-['Open_Sans',sans-serif] text-[12px] text-white">РУС</span>
        <span className="ml-5 text-center font-['Lato',sans-serif] text-[14px] leading-[12px]">RAM<br />57 %</span>
        <span className="ml-4 whitespace-nowrap text-center font-['Lato','Open_Sans',sans-serif] text-[15px] leading-[14px]">20, ПТ<br />ИЮН</span>
        <svg width="104" height="36" viewBox="0 0 104 36" className="ml-2.5">
          <text x="5" y="30" fontSize="33" fontWeight="bold" fontFamily="'DejaVu Sans Condensed','DejaVu Sans',sans-serif" fill="#fcc468" stroke="#3a2408" strokeWidth="3" paintOrder="stroke">14:03</text>
        </svg>
      </div>
    </footer>
  );
}

/* ------------------------------------------------------------------ */
/* Terminal                                                            */
/* ------------------------------------------------------------------ */

const COLS: [string, string][] = [
  ["Ордер #", "w-[108px] text-left px-1.5"], ["Символ", "w-[108px] text-center"], ["Тип", "w-[108px] text-center"],
  ["Лот", "w-[108px] text-right pr-1.5"], ["Время открытия", "w-[187px] text-right pr-1.5"], ["Цена откр.", "w-[108px] text-right pr-1.5"],
  ["S/L", "w-[108px] text-right pr-1.5"], ["T/P", "w-[108px] text-right pr-1.5"], ["Время закрытия", "w-[187px] text-right pr-1.5"],
  ["Цена закр.", "w-[108px] text-right pr-1.5"], ["Своп", "w-[108px] text-right pr-1.5"], ["Пункты", "w-[108px] text-right pr-1.5"],
  ["Прибыль", "text-right pr-1.5"],
];

function Terminal() {
  return (
    <section className="flex h-[77px] bg-[#f0f0f0]">
      <div className="flex w-[15px] shrink-0 flex-col bg-linear-to-b from-[#9cb8e8] via-[#4868b8] to-[#183888]">
        <button aria-label="Закрыть" className="mt-0.5 flex h-4 w-full items-center justify-center bg-[#f0f0f0]">
          <svg width="9" height="9" viewBox="0 0 9 9"><path d="M1 1l7 7M8 1l-7 7" stroke="#000" strokeWidth="1.600" /></svg>
        </button>
        <div className="flex h-[56px] rotate-180 items-center overflow-hidden text-[13px] leading-[15px] text-white [writing-mode:vertical-rl]">Термина</div>
      </div>
      <div className="ml-px flex min-w-0 grow flex-col border-t border-[#808080]">
        <div className="h-[55px] bg-white">
          <table className="w-full table-fixed border-collapse text-[11px]">
            <thead>
              <tr className="h-[18px] bg-[#fcfcfc]">
                {COLS.map(([n, c]) => (
                  <th key={n} className={"border-r border-[#e6ecf4] py-0 pt-0.5 font-normal leading-[16px] " + c}>{n}</th>
                ))}
              </tr>
            </thead>
            <tbody className={ARIAL}>
              <tr className="h-[19px] border-b border-[#bcbcbc] bg-[#d2d2d2] font-bold">
                <td colSpan={12} className="whitespace-pre py-0 pl-1.5">Прибыль/убыток: 65886.00  Депозит: 10000.00</td>
                <td className="relative py-0 pr-[19px] text-right">
                  75886.00
                  <span className="absolute right-0 top-0 flex h-9 w-4 flex-col items-center justify-between bg-[#f0f0f0] py-1.5">
                    <svg width="8" height="6" viewBox="0 0 8 6"><path d="M.5 5L4 1l3.500 4" fill="none" stroke="#505050" strokeWidth="1.800" /></svg>
                    <svg width="8" height="6" viewBox="0 0 8 6"><path d="M.5 1L4 5 7.500 1" fill="none" stroke="#505050" strokeWidth="1.800" /></svg>
                  </span>
                </td>
              </tr>
            </tbody>
          </table>
        </div>
        <div className="flex h-5 items-start border-t-2 border-[#757575] bg-[#d4d4d4] pl-3 text-[12px]">
          <button className="h-[17px] whitespace-pre border-r border-[#999] px-2 leading-[17px]">Открытые позиции  [ 0 ]</button>
          <button className="h-[17px] whitespace-pre pl-[9px] pr-2.5 leading-[17px]">Отложенные ордера  [ 0 ]</button>
          <button className="h-[17px] border border-t-0 border-[#555] bg-white px-[7px] leading-[17px]">История счета</button>
          <button className="h-[17px] border-r border-[#999] px-2 leading-[17px]">Журнал</button>
        </div>
      </div>
    </section>
  );
}

/* ------------------------------------------------------------------ */
/* Page                                                                */
/* ------------------------------------------------------------------ */

const MENU = ["Файл", "Редактирование", "Вид", "Вставка", "Ордера", "Тестирование", "Инструменты", "Окна", "Помощь"];
const STATUS = ["P: 33582", "O: 35748", "H:35803", "L: 35735", "C: 35789", "V: 1029"];

function Digit({ v }: { v: string }) {
  return (
    <span className="relative flex h-[38px] w-[26px] items-center justify-center rounded-[3px] bg-linear-to-b from-[#333] to-[#0c0c0c] font-['Open_Sans',sans-serif] text-[32px] font-semibold leading-none text-[#e8e8e8]">
      {v}
      <span className="absolute inset-x-0 top-[19px] h-px bg-black/70" />
    </span>
  );
}

export default function App() {
  return (
    <div className={"w-full bg-[#bdb76b] text-black " + UI}>
      <header className="relative flex h-[22px] items-start justify-between">
        <span className="pl-0.5"><Logo /></span>
        <h1 className="absolute inset-x-0 top-0 whitespace-pre pr-1 text-center font-['Open_Sans',sans-serif] text-[14px] leading-[16px] text-[#38351c]">Forex Tester 2  (Si Gaps 2014*) - [SI, H4]</h1>
        <div className="relative flex pr-[3px]">
          <button aria-label="Свернуть" className="flex h-[13px] w-7 items-start justify-center pt-[5px]"><span className="h-0.5 w-2 bg-[#222]" /></button>
          <button aria-label="Развернуть" className="flex h-[13px] w-7 items-start justify-center"><span className="h-[7px] w-2.5 border border-t-2 border-[#222]" /></button>
          <button aria-label="Закрыть окно" className="flex h-[13px] w-[45px] items-start justify-center bg-[#c85050]">
            <svg width="9" height="8" viewBox="0 0 9 8"><path d="M1 -1l7 8M8 -1l-7 8" stroke="#fff" strokeWidth="1.800" /></svg>
          </button>
        </div>
      </header>

      <main className="mr-1 border-t border-[#8d8958] bg-[#f0f0f0]">
        <nav className="flex h-[21px] items-center border-b border-[#a0a0a0] pl-1 text-[12px]">
          <Logo />
          <div className="ml-2 flex grow gap-[15px]">
            {MENU.map((m) => <button key={m} className="leading-[18px]">{m}</button>)}
          </div>
          {["M5 11h5", "M7 5.500h6v5h-2M5 8h5v4h-5z", "M5 5l6 6M11 5l-6 6"].map((d) => (
            <button key={d} aria-label="Окно" className="mr-px flex h-[18px] w-[18px] items-center justify-center border border-[#98a8b8] bg-[#dceafa]">
              <svg width="16" height="16" viewBox="0 0 16 16"><path d={d} fill="none" stroke="#607888" strokeWidth="1.800" /></svg>
            </button>
          ))}
        </nav>

        <div className="flex h-7 items-center pl-[5px]">
          <Grip />
          <Pick label="mode" value="Тестирование" className="ml-[3px] w-24" />
          <button className="flex h-6 w-[83px] shrink-0 items-center gap-1.5 border border-[#66a7e8] bg-[#b8d8f6] pl-1.5 text-[13px]">
            <svg width="12" height="19" viewBox="0 0 12 19" className="shrink-0"><path d="M6 0v19" stroke="#8a6a20" /><path d="M1 9l1-4 4-2 4 2 1 4z" fill="#fbd45c" stroke="#96741c" /><path d="M1 11h10l-1 3-4 2-4-2z" fill="#fbd45c" stroke="#96741c" /><path d="M0 9.500h12" stroke="#555" strokeWidth="2" /></svg>
            <span className="whitespace-nowrap">Stop Test</span>
          </button>
          <Tool id="strategy" /><Sep /><Tools ids={["open", "save"]} /><Sep /><Tools ids={["money", "step"]} /><Sep />
          <Tools ids={["doc", "docP", "docM", "docV", "docX", "docUp"]} /><Sep /><Tools ids={["zin", "zout"]} /><Sep />
          <Tool id="roll" on /><Tool id="shift" on /><Sep /><Tools ids={["dollar", "build"]} /><Tool id="calc" on /><Sep />
          <Tools ids={["line", "bars"]} /><Tool id="candle" on /><Sep /><Tool id="info" /><Down />
          <Tools ids={["infodoc", "broom", "camera"]} /><Sep /><Tools ids={["props", "list"]} />
        </div>

        <div className="flex h-7 items-center pl-[5px]">
          <Grip />
          <span className="ml-1 flex items-center"><Tool id="newchart" /><Down /></span>
          <label htmlFor="timeframe" className="ml-0.5 w-[68px] shrink-0 whitespace-nowrap text-[11px]">Таймфрейм:</label>
          <Pick label="timeframe" value="4 hours" className="w-24" />
          <span className="mr-2"><Tool id="tools" /></span>
          <Grip />
          <span className="ml-[3px]"><Tool id="pause" on /></span>
          <div className="ml-[7px] flex w-[87px] shrink-0 flex-col">
            <input
              type="range" aria-label="Скорость" defaultValue={14}
              className="h-[13px] w-full appearance-none border border-[#d6d6d6] bg-[#e7eaea] [&::-webkit-slider-thumb]:h-[14px] [&::-webkit-slider-thumb]:w-[9px] [&::-webkit-slider-thumb]:appearance-none [&::-webkit-slider-thumb]:rounded-b-[4px] [&::-webkit-slider-thumb]:border [&::-webkit-slider-thumb]:border-[#acacac] [&::-webkit-slider-thumb]:bg-[#f0f0f0]"
            />
            <span className="mt-1 h-0.5 w-full border-t-2 border-dotted border-[#c4c4c4]" />
          </div>
          <Pick label="tick" value="Every tick" className="ml-[7px] w-20" />
          <Tools ids={["back", "fwd", "updn"]} />
          <span className="ml-2 flex"><Grip /></span>
          <span className="ml-0.5 flex items-center"><Tool id="arrow" on /><Tool id="cross" /></span><Sep />
          <Tools ids={["vline", "hline", "trend", "ray", "wave", "text", "elliott", "shapes"]} /><Down /><Sep />
          <Tools ids={["rows", "cols", "arcs", "fan", "fibo", "pitch"]} /><Sep /><Tool id="magnet" on />
        </div>

        <div className="border-t border-white"><Chart /></div>

        <div className="flex h-[22px] items-start border-t-2 border-[#8a8a8a] bg-[#d4d4d4] text-[12px]">
          <div className="flex grow border-r border-[#808080] pl-[7px]">
            <button className="h-[18px] px-2 leading-[17px]">Profit</button>
            <button className="h-[18px] border border-t-0 border-[#555] bg-white px-[3px] leading-[17px]">SI, H4</button>
            <button className="h-[18px] border-r border-[#999] pl-[5px] pr-[3px] leading-[17px]">SI, M5</button>
          </div>
          <div className="flex h-5 w-[269px] shrink-0 items-center bg-[#f0f0f0] pr-[3px]">
            <svg width="16" height="10" viewBox="0 0 16 10"><path d="M10 1L6 5l4 4" fill="none" stroke="#505050" strokeWidth="1.800" /></svg>
            <span className="ml-[85px] h-[17px] grow bg-[#cdcdcd]" />
            <svg width="16" height="10" viewBox="0 0 16 10" className="mr-0.5"><path d="M7 1l4 4-4 4" fill="none" stroke="#505050" strokeWidth="1.800" /></svg>
            {["M12 2v10L5 7z", "M10 2v10L3 7z", "M4 2v10l7-5z", "M2 2v10l7-5z"].map((d, i) => (
              <button key={d} aria-label="Прокрутка" className="ml-px flex h-4 w-4 items-center justify-center border border-[#b8b8b8] bg-[#f0f0f0]">
                <svg width="14" height="14" viewBox="0 0 14 14" className="shrink-0">
                  <path d={d} fill="#087c14" stroke="#06601a" strokeWidth=".6" />
                  {i === 0 && <path d="M3 1v12" stroke="#101888" strokeWidth="2" />}
                  {i === 3 && <path d="M11 1v12" stroke="#101888" strokeWidth="2" />}
                </svg>
              </button>
            ))}
          </div>
        </div>

        <div className="pt-px"><Terminal /></div>

        <div className={"flex h-[24px] items-center gap-[3px] text-[12px] " + ARIAL}>
          <span className="h-5 grow border border-[#a0a0a0]" />
          <span className="h-5 w-[161px] border border-[#a0a0a0] text-center font-bold leading-[18px]">2014.05.29 12:30 (Thu)</span>
          <span className="h-5 w-[101px] whitespace-nowrap border border-[#a0a0a0] text-center text-[11px] leading-[18px]">2014.05.06 20:00</span>
          {STATUS.map((s) => <span key={s} className="h-5 w-[61px] border border-[#a0a0a0] text-center text-[11px] leading-[18px]">{s}</span>)}
        </div>
      </main>

      <TaskBar />

      <aside className={"absolute right-0 top-[275px] flex h-16 w-[152px] gap-3.5 overflow-hidden bg-[#dcdcdc]/95 pl-2 pt-2 " + ARIAL}>
        <div>
          <div className="flex gap-px"><Digit v="0" /><Digit v="5" /></div>
          <div className="text-center text-[12px] font-bold leading-[20px]">Minutes</div>
        </div>
        <span className="absolute left-[67px] top-[23px] h-0.5 w-0.5 bg-[#222] shadow-[0_10px_0_#222]" />
        <div>
          <div className="flex gap-px"><Digit v="0" /><Digit v="9" /></div>
          <div className="text-center text-[12px] font-bold leading-[20px]">Seconds</div>
        </div>
        <svg width="20" height="64" viewBox="0 0 20 64" className="absolute right-0 top-0">
          <circle cx="15" cy="15" r="12" fill="none" stroke="#c8c8c8" /><path d="M13 13h5v5h-5z" fill="#777" />
          <circle cx="15" cy="45" r="12" fill="none" stroke="#c8c8c8" /><circle cx="15" cy="45" r="7" fill="#777" />
          <path d="M11 43h3M16 43h3M12 48l3-1 3 1" fill="none" stroke="#ddd" />
        </svg>
      </aside>
    </div>
  );
}
